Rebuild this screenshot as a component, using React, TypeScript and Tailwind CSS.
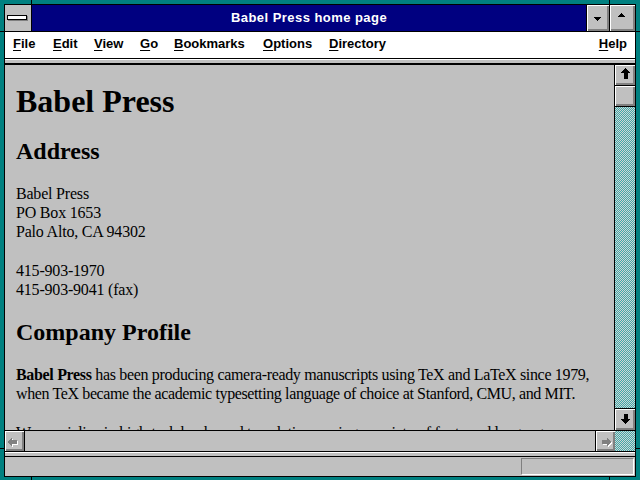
import React from "react";

const bevel =
  "bg-[#c0c0c0] shadow-[inset_1px_1px_0_#ffffff,inset_-1px_-1px_0_#808080,inset_-2px_-2px_0_#808080]";

function U({ c }: { c: string }) {
  return <span className="underline decoration-1 underline-offset-[2px]">{c}</span>;
}

function UpArrow() {
  return (
    <svg width="20" height="20" viewBox="0 0 20 20" shapeRendering="crispEdges">
      <polygon points="10.5,3 15.5,8 12.5,8 12.5,14 8.5,14 8.5,8 5.5,8" fill="#000" />
    </svg>
  );
}

function DownArrow() {
  return (
    <svg width="20" height="20" viewBox="0 0 20 20" shapeRendering="crispEdges">
      <polygon points="8.5,5 12.5,5 12.5,10 15.5,10 10.5,15 5.5,10 8.5,10" fill="#000" />
    </svg>
  );
}

function LeftArrowDisabled() {
  return (
    <svg width="19" height="20" viewBox="0 0 19 20" shapeRendering="crispEdges">
      <polygon points="7,6 7,9 12,9 12,13 7,13 7,16 3,11" transform="translate(1,1)" fill="#ffffff" />
      <polygon points="7,6 7,9 12,9 12,13 7,13 7,16 3,11" fill="#808080" />
    </svg>
  );
}

function RightArrowDisabled() {
  return (
    <svg width="19" height="20" viewBox="0 0 19 20" shapeRendering="crispEdges">
      <polygon points="11,6 11,9 6,9 6,13 11,13 11,16 15,11" transform="translate(1,1)" fill="#ffffff" />
      <polygon points="11,6 11,9 6,9 6,13 11,13 11,16 15,11" fill="#808080" />
    </svg>
  );
}

const dither =
  "bg-[repeating-conic-gradient(#3fa9a9_0_25%,#cfd6d6_0_50%)] bg-[length:2px_2px]";

export default function App() {
  return (
    <div className="relative w-[640px] h-[480px] bg-[#008080] pt-[4px] pl-[4px] pr-[4px] pb-[3px] overflow-hidden font-['Liberation_Sans',Arial,sans-serif]">
      {/* resize border marks */}
      <div className="absolute left-[31px] top-0 w-px h-[4px] bg-black" />
      <div className="absolute left-[609px] top-0 w-px h-[4px] bg-black" />
      <div className="absolute left-[31px] bottom-0 w-px h-[3px] bg-black" />
      <div className="absolute left-[609px] bottom-0 w-px h-[3px] bg-black" />
      <div className="absolute left-0 top-[31px] w-[4px] h-px bg-black" />
      <div className="absolute left-0 top-[448px] w-[4px] h-px bg-black" />
      <div className="absolute right-0 top-[31px] w-[4px] h-px bg-black" />
      <div className="absolute right-0 top-[448px] w-[4px] h-px bg-black" />

      <div className="h-full border border-black flex flex-col bg-[#c0c0c0]">
        {/* Title bar */}
        <div className="h-[27px] flex border-b border-black shrink-0">
          <div className="w-[27px] shrink-0 border-r border-black bg-[#c0c0c0] pt-[10px] pl-[2px]">
            <div className="w-[20px] h-[5px] bg-white border border-black shadow-[1px_1px_0_#808080]" />
          </div>
          <div className="flex-1 border-r border-black bg-[#000080] text-white font-bold text-[13px] leading-[26px] tracking-[0.45px] text-center whitespace-nowrap">
            Babel Press home page
          </div>
          <div className="w-[23px] shrink-0 border-r border-black">
            <div className={`h-full ${bevel} flex justify-center`}>
              <svg width="7" height="4" viewBox="0 0 7 4" className="mt-[12px] -ml-[1px]" shapeRendering="crispEdges">
                <polygon points="0,0 7,0 3.5,4" fill="#000" />
              </svg>
            </div>
          </div>
          <div className={`w-[25px] shrink-0 ${bevel} flex justify-center`}>
            <svg width="7" height="4" viewBox="0 0 7 4" className="mt-[8px] -ml-[2px]" shapeRendering="crispEdges">
              <polygon points="3.5,0 7,4 0,4" fill="#000" />
            </svg>
          </div>
        </div>

        {/* Menu bar */}
        <div className="h-[27px] bg-white border-b border-black flex items-start text-black font-bold text-[13px] leading-[24px] pl-[8px] pr-[8px] shrink-0">
          <div className="w-[40px]"><U c="F" />ile</div>
          <div className="w-[41px]"><U c="E" />dit</div>
          <div className="w-[46px]"><U c="V" />iew</div>
          <div className="w-[34px]"><U c="G" />o</div>
          <div className="w-[89px]"><U c="B" />ookmarks</div>
          <div className="w-[66px]"><U c="O" />ptions</div>
          <div><U c="D" />irectory</div>
          <div className="ml-auto"><U c="H" />elp</div>
        </div>

        {/* separator band */}
        <div className="h-[5px] border-t border-white border-b border-b-black bg-[#c0c0c0] shrink-0" />

        {/* Main area */}
        <div className="flex-1 min-h-0 flex border-t border-black">
          <div className="flex-1 min-w-0 overflow-hidden pl-[11px] pt-[17px] font-['Liberation_Serif','Times_New_Roman',serif] text-black">
            <h1 className="text-[32px] leading-[38px] font-bold whitespace-nowrap">Babel Press</h1>
            <h2 className="mt-[17px] text-[24px] leading-[28px] font-bold whitespace-nowrap">Address</h2>
            <p className="mt-[19px] text-[16px] leading-[19px] whitespace-nowrap tracking-[-0.2px]">
              Babel Press
              <br />
              PO Box 1653
              <br />
              Palo Alto, CA 94302
            </p>
            <p className="mt-[20px] text-[16px] leading-[19px] whitespace-nowrap tracking-[-0.2px]">
              415-903-1970
              <br />
              415-903-9041 (fax)
            </p>
            <h2 className="mt-[19px] text-[24px] leading-[28px] font-bold whitespace-nowrap">Company Profile</h2>
            <p className="mt-[19px] text-[16px] leading-[19px] whitespace-nowrap">
              <span className="tracking-[-0.33px]">
                <b>Babel Press</b> has been producing camera-ready manuscripts using TeX and LaTeX since 1979,
              </span>
              <br />
              <span className="tracking-[-0.38px]">
                when TeX became the academic typesetting language of choice at Stanford, CMU, and MIT.
              </span>
            </p>
            <p className="mt-[20px] text-[16px] leading-[19px] whitespace-nowrap tracking-[-0.3px]">
              We specialize in high-tech books and translations, using a variety of fonts and languages
            </p>
          </div>
          <div className="w-[21px] shrink-0 border-l border-black flex flex-col">
            <div className="h-[21px] border-b border-black">
              <div className={`h-full ${bevel}`}>
                <UpArrow />
              </div>
            </div>
            <div className="h-[21px] border-b border-black">
              <div className={`h-full ${bevel}`} />
            </div>
            <div className={`flex-1 ${dither}`} />
            <div className="h-[22px] border-t border-black">
              <div className={`h-full ${bevel}`}>
                <DownArrow />
              </div>
            </div>
          </div>
        </div>

        {/* Horizontal scrollbar */}
        <div className="h-[22px] border-t border-b border-black flex shrink-0">
          <div className="w-[20px] shrink-0 border-r border-black">
            <div className={`h-full ${bevel}`}>
              <LeftArrowDisabled />
            </div>
          </div>
          <div className="flex-1 bg-[#c0c0c0]" />
          <div className="w-[20px] shrink-0 border-l border-black">
            <div className={`h-full ${bevel}`}>
              <RightArrowDisabled />
            </div>
          </div>
          <div className={`w-[20px] shrink-0 ${dither}`} />
        </div>

        {/* separator band */}
        <div className="h-[5px] border-t border-white border-b border-b-black bg-[#c0c0c0] shrink-0" />

        {/* Status bar */}
        <div className="h-[19px] flex justify-end items-center pr-[1px] shrink-0 bg-[#c0c0c0]">
          <div className="w-[113px] h-[17px] border border-t-[#808080] border-l-[#808080] border-b-white border-r-white" />
        </div>
      </div>
    </div>
  );
}
